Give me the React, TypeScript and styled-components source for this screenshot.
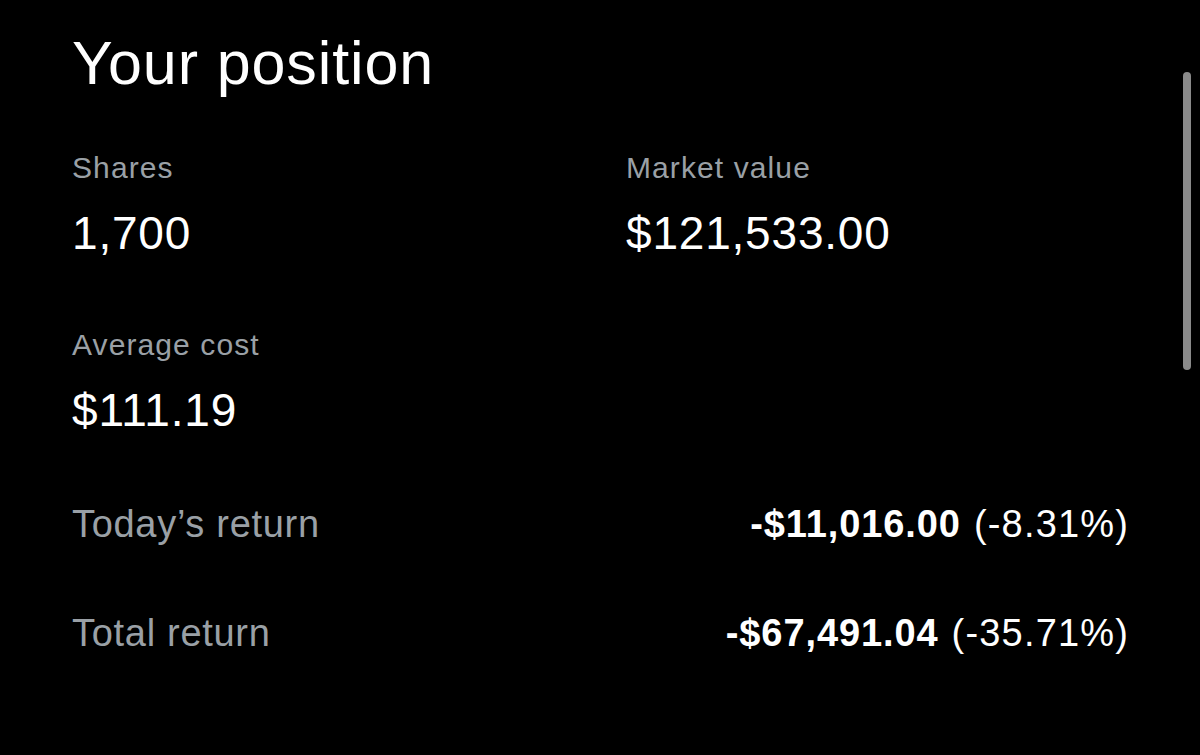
import React from 'react';
import styled, { createGlobalStyle } from 'styled-components';

const GlobalStyle = createGlobalStyle`
  html, body {
    margin: 0;
    padding: 0;
    background: #000000;
  }
  body {
    font-family: "Liberation Sans", Arial, sans-serif;
    color: #ffffff;
  }
`;

const Page = styled.div`
  position: relative;
  width: 1200px;
  height: 755px;
  overflow: hidden;
  box-sizing: border-box;
  padding: 33px 72px 0 72px;
  background: #000000;
`;

const Title = styled.h1`
  margin: 0;
  font-size: 61px;
  font-weight: 400;
  line-height: 1;
  letter-spacing: 0.9px;
  color: #ffffff;
`;

const StatsGrid = styled.div`
  display: grid;
  grid-template-columns: 554px 1fr;
  row-gap: 73.5px;
  margin-top: 58.5px;
`;

const Stat = styled.div`
  display: flex;
  flex-direction: column;
  gap: 27.5px;
`;

const Label = styled.div<{ $size?: number }>`
  font-size: ${(p) => p.$size ?? 30}px;
  line-height: 1;
  letter-spacing: ${(p) => (p.$size ? 0.7 : 1.1)}px;
  color: #9aa0a6;
`;

const Value = styled.div`
  font-size: 46px;
  line-height: 1;
  letter-spacing: 0.8px;
  color: #ffffff;
`;

const ReturnList = styled.div`
  display: flex;
  flex-direction: column;
  gap: 71px;
  margin-top: 72px;
`;

const ReturnRow = styled.div`
  display: flex;
  justify-content: space-between;
  align-items: baseline;
  font-size: 38px;
  line-height: 1;
`;

const Amount = styled.span`
  font-weight: 700;
  letter-spacing: 0.9px;
  color: #ffffff;
`;

const Percent = styled.span`
  font-weight: 400;
  letter-spacing: 1.2px;
  color: #ffffff;
  margin-left: 13px;
  margin-right: -1.2px;
`;

const ScrollThumb = styled.div`
  position: absolute;
  top: 72px;
  right: 9px;
  width: 8px;
  height: 298px;
  border-radius: 4px;
  background: #8a8a8a;
`;

type StatItem = { label: string; value: string };
type ReturnItem = { label: string; amount: string; percent: string };

const stats: StatItem[] = [
  { label: 'Shares', value: '1,700' },
  { label: 'Market value', value: '$121,533.00' },
  { label: 'Average cost', value: '$111.19' },
];

const returns: ReturnItem[] = [
  { label: 'Today’s return', amount: '-$11,016.00', percent: '(-8.31%)' },
  { label: 'Total return', amount: '-$67,491.04', percent: '(-35.71%)' },
];

export default function App() {
  return (
    <>
      <GlobalStyle />
      <Page>
        <Title>Your position</Title>
        <StatsGrid>
          {stats.map((s) => (
            <Stat key={s.label}>
              <Label>{s.label}</Label>
              <Value>{s.value}</Value>
            </Stat>
          ))}
        </StatsGrid>
        <ReturnList>
          {returns.map((r) => (
            <ReturnRow key={r.label}>
              <Label $size={38}>{r.label}</Label>
              <div>
                <Amount>{r.amount}</Amount>
                <Percent>{r.percent}</Percent>
              </div>
            </ReturnRow>
          ))}
        </ReturnList>
        <ScrollThumb />
      </Page>
    </>
  );
}
